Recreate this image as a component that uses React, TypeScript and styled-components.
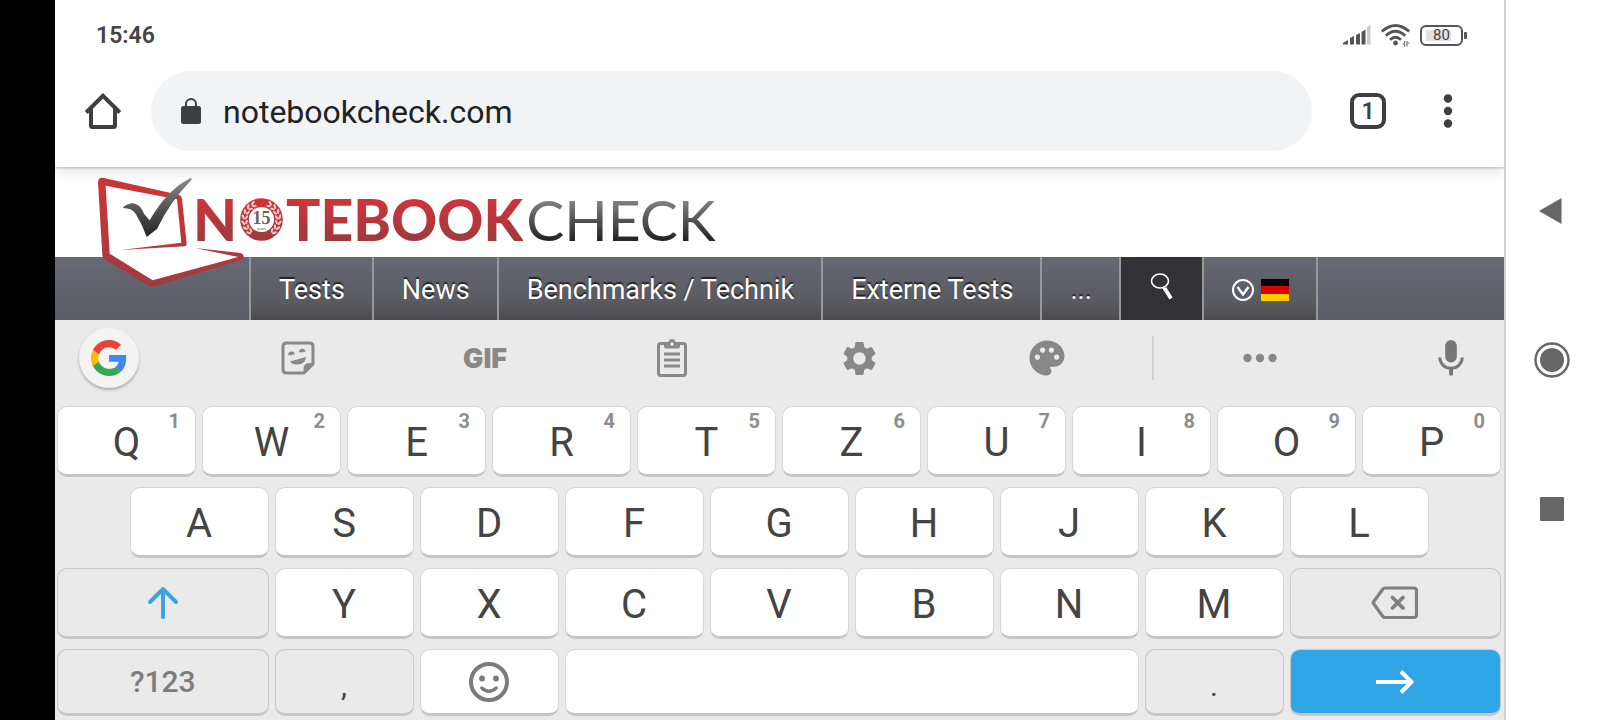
import React from "react";
import styled, { createGlobalStyle, css } from "styled-components";
import { MdSettings, MdPalette } from "react-icons/md";

const GlobalStyle = createGlobalStyle`
  *, *::before, *::after { box-sizing: border-box; }
  body { margin: 0; background: #fff; font-family: Roboto, "Noto Sans", sans-serif; }
  button, input { font: inherit; color: inherit; border: 0; padding: 0; margin: 0; background: none; }
  svg { display: block; flex: none; }
`;

const Screen = styled.div`
  display: flex;
  min-height: 100vh;
  background: #fff;
`;

const CameraEdge = styled.div`
  flex: none;
  width: 55px;
  background: #000;
`;

const Main = styled.main`
  flex: 1;
  min-width: 0;
  display: flex;
  flex-direction: column;
`;

/* Status bar */

const StatusBar = styled.div`
  display: flex;
  align-items: center;
  justify-content: space-between;
  height: 70px;
  padding: 0 37px 0 41px;
  color: #444;
`;

const Clock = styled.time`
  font-size: 23px;
  font-weight: 600;
`;

const StatusIcons = styled.div`
  display: flex;
  align-items: center;
  gap: 10px;
`;

const Battery = styled.div`
  display: flex;
  align-items: center;
  gap: 1px;
  &::after {
    content: "";
    width: 3px;
    height: 7px;
    border-radius: 1px;
    background: #555;
  }
`;

const BatteryBody = styled.span`
  display: grid;
  place-items: center;
  width: 43px;
  height: 21px;
  border: 2px solid #555;
  border-radius: 6px;
  background: linear-gradient(#e2e2e2, #e2e2e2) 4px 3px / 25px 11px no-repeat;
  font-size: 15px;
  line-height: 17px;
`;

/* Browser toolbar */

const BrowserBar = styled.div`
  position: relative;
  z-index: 2;
  display: flex;
  align-items: center;
  height: 97px;
  padding: 0 36px 16px 28px;
  background: #fff;
  color: #3c4043;
  box-shadow: 0 1px 2px #0003, 0 4px 14px #0002;
  clip-path: inset(0 0 -24px 0);
`;

const IconButton = styled.button`
  display: grid;
  place-items: center;
  width: 40px;
  height: 48px;
`;

const AddressBox = styled.label`
  flex: 1;
  display: flex;
  align-items: center;
  gap: 22px;
  height: 80px;
  margin: 0 38px 0 28px;
  padding: 0 30px;
  border-radius: 40px;
  background: #f1f3f4;
`;

const AddressInput = styled.input`
  flex: 1;
  min-width: 0;
  height: 48px;
  padding-top: 2px;
  font-size: 32px;
  color: #202124;
  outline: none;
`;

const TabCount = styled.button`
  display: grid;
  place-items: center;
  width: 36px;
  height: 36px;
  margin-right: 42px;
  padding-top: 2px;
  border: 4px solid #3c4043;
  border-radius: 9px;
  font-size: 23px;
  font-weight: 600;
  line-height: 26px;
`;

/* Website */

const SiteHeader = styled.header`
  display: flex;
  align-items: flex-start;
  height: 90px;
  padding-left: 40px;
`;

const Brand = styled.a`
  position: relative;
  z-index: 1;
  display: flex;
  align-items: flex-start;
  text-decoration: none;
`;

const LaptopArt = styled.svg`
  margin: 8px -52px 0 0;
`;

const Wordmark = styled.span`
  display: flex;
  align-items: center;
  gap: 3px;
  height: 64px;
  margin-top: 20px;
  font-family: Lato, sans-serif;
  font-size: 57px;
  line-height: 64px;
`;

const WordPart = styled.span<{ $light?: boolean }>`
  font-weight: ${(p) => (p.$light ? 400 : 900)};
  background: ${(p) =>
    p.$light
      ? "linear-gradient(#868686 12px, #262626 52px)"
      : "linear-gradient(#d0343a 12px, #a03a3e 52px)"};
  background-clip: text;
  color: transparent;
`;

const SiteNav = styled.nav`
  display: flex;
  height: 63px;
  padding-left: 194px;
  background: linear-gradient(#666873, #5a5c67);
`;

const NavItem = styled.a<{ $dark?: boolean }>`
  display: flex;
  align-items: center;
  gap: 7px;
  padding: 2px 27px 0 28px;
  border-left: 2px solid #98989b;
  background: ${(p) => (p.$dark ? "#333237" : "linear-gradient(#666873, #5a5a61 70%, #4c4c50)")};
  color: #fff;
  font-size: 27px;
  text-decoration: none;
  text-shadow: 0 -2px 1px #222;
  white-space: nowrap;
  &:last-child { border-right: 2px solid #98989b; }
`;

/* Keyboard */

const Keyboard = styled.section`
  flex: 1;
  background: #eaeaea;
`;

const ToolStrip = styled.div`
  display: grid;
  grid-template-columns: 149fr repeat(5, 187fr) 24fr 190fr 149fr;
  align-items: center;
  justify-items: center;
  height: 86px;
  padding-bottom: 10px;
  color: #888;
`;

const ToolButton = styled.button<{ $side?: "start" | "end" }>`
  display: grid;
  place-items: center;
  width: 60px;
  height: 60px;
  border-radius: 50%;
  font-family: Inter, sans-serif;
  font-size: 27px;
  font-weight: 900;
  ${(p) => p.$side && css`
    justify-self: ${p.$side};
    margin: 0 23px 0 24px;
  `}
`;

const GoogleButton = styled(ToolButton)`
  background: #f3f3f3;
  box-shadow: 0 2px 3px #0004;
`;

const Divider = styled.span`
  width: 2px;
  height: 44px;
  background: #cfd1d1;
`;

const KeyRow = styled.div<{ $short?: boolean }>`
  display: grid;
  grid-template-columns: repeat(20, 1fr);
  column-gap: 6px;
  height: ${(p) => (p.$short ? 67 : 71)}px;
  margin-bottom: ${(p) => (p.$short ? 4 : 10)}px;
  padding: 0 3px 0 2px;
`;

const KeyCap = styled.button<{ $span: number; $start?: number; $tone?: "grey" | "blue" }>`
  position: relative;
  display: grid;
  place-items: center;
  grid-column: ${(p) => p.$start ?? "auto"} / span ${(p) => p.$span};
  border: 1px solid ${(p) => (p.$tone ? "#c8c8c8" : "#d6d6d6")};
  border-bottom: 3px solid #c6c6c6;
  border-radius: 10px;
  background: ${(p) => (p.$tone === "blue" ? "#30a5e5" : p.$tone === "grey" ? "#eaeaea" : "#fff")};
  color: #444;
  font-size: 40px;
  line-height: 48px;
`;

const Letter = styled.span`
  padding-top: 4px;
`;

const Hint = styled.span`
  position: absolute;
  top: 2px;
  right: 15px;
  color: #8e8e8e;
  font-size: 20px;
  font-weight: 700;
  line-height: 24px;
`;

const SymbolLabel = styled.span`
  color: #7d7d7d;
  font-size: 30px;
  font-weight: 500;
`;

const Punctuation = styled.span`
  padding-top: 8px;
  font-size: 30px;
`;

/* System navigation */

const SystemNav = styled.nav`
  flex: none;
  display: flex;
  flex-direction: column;
  align-items: center;
  justify-content: center;
  gap: 101px;
  width: 96px;
  padding-right: 2px;
  border-left: 2px solid #d0d0d0;
  color: #666;
`;

const Signal = () => (
  <svg width="28" height="20" viewBox="0 0 28 20" fill="#555">
    <path d="M0 19.500V18l5-3v4.500zM7 19.500v-6.500l4-2v8.500zM13 19.500v-9.500l4-2v11.500zM18.500 19.500v-12.500l4-2.500v15z" />
    <path fill="#ccc" d="M24 19.500V2l3.500-2v19.500z" />
  </svg>
);

const Wifi = () => (
  <svg width="29" height="23" viewBox="0 0 29 23" fill="none" stroke="#555" strokeWidth="2.800">
    <path d="M.8 7.500Q14.500-4.500 28.200 7.500M4.800 11.800Q14.500 2.800 24.200 11.800M9 15.800Q14.500 10.500 20 15.800" />
    <circle cx="14.500" cy="19" r="2.400" fill="#555" stroke="none" />
    <path strokeWidth="1.200" stroke="#777" d="M23.600 17v5.500M26 22.500V17M21.500 20h2M26 19h2.500" />
  </svg>
);

const Home = () => (
  <svg width="36" height="36" viewBox="0 0 36 36" fill="none" stroke="currentColor" strokeWidth="4">
    <path strokeLinejoin="round" d="M6 16v16.500q0 1.500 1.500 1.500h21q1.500 0 1.500-1.500V16" />
    <path d="M1.200 19.500L18 2.800l16.800 16.700" />
  </svg>
);

const Lock = () => (
  <svg width="20" height="26" viewBox="0 0 20 26" fill="#3c4043">
    <rect y="8" width="20" height="18" rx="2.500" />
    <path fill="none" stroke="#3c4043" strokeWidth="2" d="M5 9V6a5 5 0 0 1 10 0v3" />
  </svg>
);

const Dots = ({ vertical }: { vertical?: boolean }) => (
  <svg width={vertical ? 10 : 34} height={vertical ? 34 : 10} viewBox={vertical ? "0 0 10 34" : "0 0 34 10"} fill="currentColor">
    {[4.5, 17, 29.5].map((p) => (
      <circle key={p} cx={vertical ? 5 : p} cy={vertical ? p : 5} r="4.200" />
    ))}
  </svg>
);

const Laptop = () => (
  <LaptopArt width="150" height="115" viewBox="45 30 450 345">
    <defs>
      <linearGradient id="lid" x1="0" y1="0" x2="0" y2="1">
        <stop offset="0" stopColor="#d13338" />
        <stop offset="1" stopColor="#9f3c3f" />
      </linearGradient>
      <linearGradient id="tick" x1="0" y1="0" x2="0" y2="1">
        <stop offset="0" stopColor="#8a8a8a" />
        <stop offset="1" stopColor="#242424" />
      </linearGradient>
    </defs>
    <path fill="#fff" d="M64 48L296 100L312 238L345 250L484 274L220 356L76 274z" />
    <path
      fill="url(#lid)"
      d="M54 52Q54 37 68 38L296 89Q305 92 306 101L320 236Q321 243 314 244L122 255L304 233L291 103L77 62L89 266L218 346L475 276L345 249L482 264Q492 267 491 277Q490 283 482 286L228 363Q216 368 206 362L75 284Q67 279 67 270z"
    />
    <path fill="url(#tick)" d="M130 126Q150 112 165 116Q182 120 192 146L209 166Q262 72 334 38Q336 42 334 45Q270 110 231 192L200 216Q188 182 168 148Q155 127 130 130z" />
  </LaptopArt>
);

const leaves = [28, 46, 64, 82, 100, 118, 136];

const Anniversary = () => (
  <svg width="43" height="43" viewBox="-21.500 -21.500 43 43">
    <defs>
      <linearGradient id="seal" x1="0" y1="0" x2="0" y2="1">
        <stop offset="0" stopColor="#d13338" />
        <stop offset="1" stopColor="#a03a3e" />
      </linearGradient>
    </defs>
    <circle r="21.300" fill="url(#seal)" />
    <circle r="12.600" fill="#fff" />
    {[1, -1].map((side) => (
      <g key={side} transform={`scale(${side} 1)`} fill="#f3c9c9">
        {leaves.map((a) => (
          <g key={a} transform={`rotate(${a})`}>
            <ellipse cx="0" cy="-18.500" rx="2.700" ry="1.200" transform="rotate(28 0 -18.500)" />
            <ellipse cx="0" cy="-15.200" rx="2.500" ry="1.100" transform="rotate(-28 0 -15.200)" />
          </g>
        ))}
      </g>
    ))}
    <text y="4" textAnchor="middle" fontFamily="'Liberation Serif', serif" fontSize="18" fontWeight="700" fill="#666">15</text>
    <text y="10" textAnchor="middle" fontFamily="'Liberation Serif', serif" fontSize="4" fill="#444">years</text>
  </svg>
);

const Magnifier = () => (
  <svg width="26" height="36" viewBox="0 0 26 36" fill="none" stroke="#fff">
    <ellipse cx="11" cy="9" rx="8.500" ry="7" strokeWidth="1.600" />
    <path strokeWidth="1.600" d="M14 15.500l2 3" />
    <path strokeWidth="3.800" d="M15.500 16L22 26.500" />
  </svg>
);

const LanguageArrow = () => (
  <svg width="22" height="22" viewBox="0 0 22 22" fill="none" stroke="#fff" strokeWidth="2">
    <circle cx="11" cy="11" r="10" />
    <path strokeWidth="2.400" d="M5.500 8l5.500 7.500L16.500 8" />
  </svg>
);

const Flag = () => (
  <svg width="28" height="22" viewBox="0 0 28 22" role="img" aria-label="Deutsch">
    <rect width="28" height="8" fill="#000" />
    <rect y="7" width="28" height="8" fill="#d00" />
    <rect y="15" width="28" height="7" fill="#ffce00" />
  </svg>
);

const GoogleG = () => (
  <svg width="36" height="36" viewBox="0 0 48 48">
    <path fill="#EA4335" d="M24 9.500c3.540 0 6.710 1.220 9.210 3.600l6.850-6.850C35.900 2.380 30.470 0 24 0 14.620 0 6.510 5.380 2.560 13.220l7.980 6.190C12.430 13.720 17.740 9.500 24 9.500z" />
    <path fill="#4285F4" d="M46.980 24.550c0-1.570-.15-3.090-.38-4.550H24v9.020h12.940c-.58 2.960-2.260 5.480-4.780 7.180l7.730 6c4.510-4.180 7.090-10.360 7.090-17.650z" />
    <path fill="#FBBC05" d="M10.530 28.590c-.48-1.450-.76-2.990-.76-4.590s.27-3.140.76-4.590l-7.980-6.190C.92 16.460 0 20.120 0 24c0 3.880.92 7.540 2.560 10.780l7.970-6.190z" />
    <path fill="#34A853" d="M24 48c6.480 0 11.930-2.130 15.890-5.810l-7.730-6c-2.150 1.450-4.920 2.300-8.160 2.300-6.260 0-11.570-4.220-13.470-9.910l-7.980 6.190C6.510 42.620 14.620 48 24 48z" />
  </svg>
);

const Sticker = () => (
  <svg width="34" height="34" viewBox="0 0 34 34" fill="currentColor">
    <path fill="none" stroke="currentColor" strokeWidth="3" strokeLinejoin="round" d="M23 32H5.500Q2 32 2 28.500v-23Q2 2 5.500 2h23Q32 2 32 5.500V23z" />
    <path d="M33 22l-10.500 11V28q0-6 6-6z" />
    <path d="M7.200 14.500q0-4 3.200-4t3.200 3.200q-2.200-.8-3.200 .8-1.500-1.200-3.200 0zM18 11.700q0-4 3.200-4t3.200 3.200q-2.200-.8-3.200 .8-1.500-1.200-3.200 0zM9 20.500l16-4.500q-.5 6.500-7.500 7.500-6 .5-8.500-3z" />
  </svg>
);

const Clipboard = () => (
  <svg width="30" height="38" viewBox="0 0 30 38" fill="none" stroke="currentColor" strokeWidth="3">
    <rect x="1.500" y="4.500" width="27" height="32" rx="2.500" />
    <path strokeWidth="2.800" d="M7 15h16M7 21h16M7 27h16" />
    <path fill="currentColor" stroke="none" d="M7 4h4q1-4 4-4t4 4h4v3q0 2.500-2.500 2.500h-11Q7 9.500 7 7z" />
    <circle cx="15" cy="5" r="1.800" fill="#eaeaea" stroke="none" />
  </svg>
);

const Mic = () => (
  <svg width="26" height="36" viewBox="0 0 26 36" fill="#777">
    <rect x="7.200" width="11.600" height="22.500" rx="5.800" />
    <path fill="none" stroke="#777" strokeWidth="3" d="M1.700 17.500C2 24 7 28.200 13 28.200S24 24 24.300 17.500" />
    <rect x="11.200" y="28" width="3.800" height="7.500" rx="1" />
  </svg>
);

const Shift = () => (
  <svg width="32" height="34" viewBox="0 0 32 34" fill="none" stroke="#3aa4de" strokeWidth="4" strokeLinecap="round" strokeLinejoin="round">
    <path d="M16 31V3M3 16L16 3l13 13" />
  </svg>
);

const Backspace = () => (
  <svg width="48" height="34" viewBox="0 0 48 34" fill="none" stroke="#808080" strokeWidth="3.200" strokeLinejoin="round">
    <path d="M14 2h28.500Q45.500 2 45.500 4.500v24.500Q45.500 31.500 42.500 31.500H14Q12.500 31.500 11.500 30L2 16.800 11.500 3.500Q12.500 2 14 2z" />
    <path strokeWidth="3.800" strokeLinecap="round" d="M21.500 11.500l10.500 10.500M32 11.500L21.500 22" />
  </svg>
);

const Smiley = () => (
  <svg width="40" height="40" viewBox="0 0 40 40" fill="#7b7b7b">
    <circle cx="20" cy="20" r="18" fill="none" stroke="#7b7b7b" strokeWidth="4" />
    <circle cx="13" cy="16.500" r="2.900" />
    <circle cx="27" cy="16.500" r="2.900" />
    <path fill="none" stroke="#7b7b7b" strokeWidth="3.400" strokeLinecap="round" d="M12.800 26Q20 32.500 27.200 26" />
  </svg>
);

const Go = () => (
  <svg width="38" height="24" viewBox="0 0 38 24" fill="none" stroke="#fff" strokeWidth="4">
    <path d="M0 12h34M25 1.500L35.500 12 25 22.500" />
  </svg>
);

const topRow = ["Q", "W", "E", "R", "T", "Z", "U", "I", "O", "P"];
const homeRow = ["A", "S", "D", "F", "G", "H", "J", "K", "L"];
const lowRow = ["Y", "X", "C", "V", "B", "N", "M"];

export default function App() {
  return (
    <>
      <GlobalStyle />
      <Screen>
        <CameraEdge />
        <Main>
          <StatusBar>
            <Clock>15:46</Clock>
            <StatusIcons>
              <Signal />
              <Wifi />
              <Battery><BatteryBody>80</BatteryBody></Battery>
            </StatusIcons>
          </StatusBar>
          <BrowserBar>
            <IconButton aria-label="Home"><Home /></IconButton>
            <AddressBox>
              <Lock />
              <AddressInput aria-label="Address" defaultValue="notebookcheck.com" />
            </AddressBox>
            <TabCount aria-label="Open tabs">1</TabCount>
            <IconButton aria-label="Menu"><Dots vertical /></IconButton>
          </BrowserBar>
          <SiteHeader>
            <Brand href="#" aria-label="Notebookcheck">
              <Laptop />
              <Wordmark>
                <WordPart>N</WordPart>
                <Anniversary />
                <WordPart>TEBOOK</WordPart>
                <WordPart $light>CHECK</WordPart>
              </Wordmark>
            </Brand>
          </SiteHeader>
          <SiteNav>
            <NavItem href="#">Tests</NavItem>
            <NavItem href="#">News</NavItem>
            <NavItem href="#">Benchmarks / Technik</NavItem>
            <NavItem href="#">Externe Tests</NavItem>
            <NavItem href="#">...</NavItem>
            <NavItem href="#" $dark aria-label="Suche"><Magnifier /></NavItem>
            <NavItem href="#" aria-label="Sprache"><LanguageArrow /><Flag /></NavItem>
          </SiteNav>
          <Keyboard>
            <ToolStrip>
              <GoogleButton $side="start" aria-label="Google"><GoogleG /></GoogleButton>
              <ToolButton aria-label="Stickers"><Sticker /></ToolButton>
              <ToolButton>GIF</ToolButton>
              <ToolButton aria-label="Clipboard"><Clipboard /></ToolButton>
              <ToolButton aria-label="Settings"><MdSettings size={41} /></ToolButton>
              <ToolButton aria-label="Themes"><MdPalette size={42} /></ToolButton>
              <Divider />
              <ToolButton aria-label="More"><Dots /></ToolButton>
              <ToolButton $side="end" aria-label="Voice input"><Mic /></ToolButton>
            </ToolStrip>
            <KeyRow>
              {topRow.map((k, i) => (
                <KeyCap key={k} $span={2}><Letter>{k}</Letter><Hint>{(i + 1) % 10}</Hint></KeyCap>
              ))}
            </KeyRow>
            <KeyRow>
              {homeRow.map((k, i) => (
                <KeyCap key={k} $span={2} $start={i * 2 + 2}><Letter>{k}</Letter></KeyCap>
              ))}
            </KeyRow>
            <KeyRow>
              <KeyCap $span={3} $tone="grey" aria-label="Shift"><Shift /></KeyCap>
              {lowRow.map((k) => (
                <KeyCap key={k} $span={2}><Letter>{k}</Letter></KeyCap>
              ))}
              <KeyCap $span={3} $tone="grey" aria-label="Backspace"><Backspace /></KeyCap>
            </KeyRow>
            <KeyRow $short>
              <KeyCap $span={3} $tone="grey"><SymbolLabel>?123</SymbolLabel></KeyCap>
              <KeyCap $span={2} $tone="grey"><Punctuation>,</Punctuation></KeyCap>
              <KeyCap $span={2} aria-label="Emoji"><Smiley /></KeyCap>
              <KeyCap $span={8} aria-label="Space" />
              <KeyCap $span={2} $tone="grey"><Punctuation>.</Punctuation></KeyCap>
              <KeyCap $span={3} $tone="blue" aria-label="Go"><Go /></KeyCap>
            </KeyRow>
          </Keyboard>
        </Main>
        <SystemNav>
          <IconButton aria-label="Back">
            <svg width="28" height="28" viewBox="0 0 28 28"><path fill="#666" d="M23.500 1v26L1 14z" /></svg>
          </IconButton>
          <IconButton aria-label="Home screen">
            <svg width="36" height="36" viewBox="0 0 36 36">
              <circle cx="18" cy="18" r="16.500" fill="none" stroke="#666" strokeWidth="2.400" />
              <circle cx="18" cy="18" r="12" fill="#666" />
            </svg>
          </IconButton>
          <IconButton aria-label="Recent apps">
            <svg width="24" height="24" viewBox="0 0 24 24"><rect width="24" height="24" rx="1" fill="#666" /></svg>
          </IconButton>
        </SystemNav>
      </Screen>
    </>
  );
}
